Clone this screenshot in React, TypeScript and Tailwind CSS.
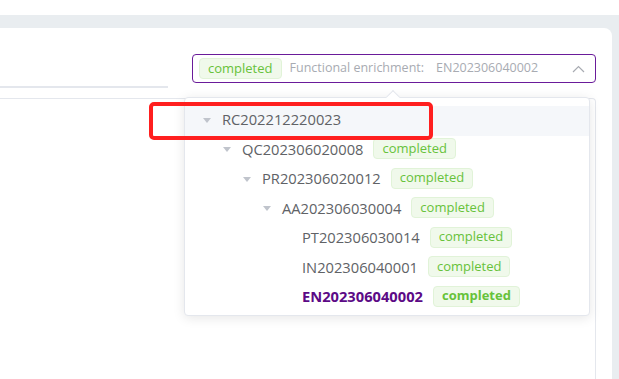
import React from "react"

interface TreeNode {
  code: string
  level: number
  expandable: boolean
  status?: string
  current?: boolean
  highlighted?: boolean
}

const nodes: TreeNode[] = [
  { code: "RC202212220023", level: 0, expandable: true, highlighted: true },
  { code: "QC202306020008", level: 1, expandable: true, status: "completed" },
  { code: "PR202306020012", level: 2, expandable: true, status: "completed" },
  { code: "AA202306030004", level: 3, expandable: true, status: "completed" },
  { code: "PT202306030014", level: 4, expandable: false, status: "completed" },
  { code: "IN202306040001", level: 4, expandable: false, status: "completed" },
  { code: "EN202306040002", level: 4, expandable: false, status: "completed", current: true },
]

const indent = ["pl-[18px]", "pl-[38px]", "pl-[58px]", "pl-[78px]", "pl-[98px]"]

function StatusTag({ label, bold }: { label: string; bold?: boolean }) {
  return (
    <span
      className={`inline-flex h-[21px] items-center rounded-[4px] border border-[#e1f3d8] bg-[#f0f9eb] px-[8px] pb-[1px] text-[13px] leading-none text-[#67c23a] ${
        bold ? "font-bold" : ""
      }`}
    >
      {label}
    </span>
  )
}

function Caret() {
  return (
    <svg width="8" height="5" viewBox="0 0 8 5">
      <polygon points="0,0 8,0 4,5" fill="#c0c4cc" />
    </svg>
  )
}

export default function App() {
  return (
    <div className="relative h-[379px] w-[619px] overflow-hidden bg-white font-['Open_Sans',sans-serif]">
      <div className="h-[15px] bg-white" />

      <div className="h-[364px] bg-[#e9edf0] pr-[7px] pt-[13px]">
        <div className="relative h-full rounded-tr-[8px] bg-white">
          {/* header: tabs + lineage select */}
          <div className="flex h-[70px]">
            <div className="h-[60px] w-[168px] border-b-2 border-[#e4e7ed]" />
            <div className="ml-[24px] mt-[26px] flex h-[29px] w-[404px] items-center rounded-[4px] border border-[#6a1b9a] pl-[6px] pr-[10px]">
              <StatusTag label="completed" />
              <span className="ml-[8px] text-[12.5px] text-[#a8abb2]">Functional enrichment:</span>
              <span className="ml-[12px] text-[12.5px] text-[#a8abb2]">EN202306040002</span>
              <svg width="13" height="8" viewBox="0 0 13 8" className="ml-auto">
                <polyline points="1,7 6.5,1.5 12,7" fill="none" stroke="#a8abb2" strokeWidth="1.2" />
              </svg>
            </div>
          </div>

          {/* content panel */}
          <div className="-ml-px h-[281px] w-[597px] rounded-tr-[4px] border border-b-0 border-[#e4e7ed]" />

          {/* dropdown tree */}
          <div className="absolute left-[184px] top-[69px] h-[219px] w-[406px] rounded-[4px] border border-[#e4e7ed] bg-white pt-[8px] shadow-[0_2px_12px_0_rgba(0,0,0,0.1)]">
            <div className="absolute -top-[6px] left-[203px] h-[10px] w-[10px] rotate-45 border-l border-t border-[#e4e7ed] bg-white" />
            {nodes.map((node) => (
              <div
                key={node.code}
                className={`relative flex h-[29.5px] items-center pb-[3px] ${indent[node.level]} ${
                  node.highlighted ? "bg-[#f5f7fa]" : ""
                }`}
              >
                <span className="flex w-[19px] items-center pt-[2px]">{node.expandable && <Caret />}</span>
                <span
                  className={`text-[14.7px] ${
                    node.current ? "font-bold text-[#5c0a86]" : "text-[#606266]"
                  }`}
                >
                  {node.code}
                </span>
                {node.status && (
                  <span className="ml-[10px] flex">
                    <StatusTag label={node.status} bold={node.current} />
                  </span>
                )}
              </div>
            ))}
          </div>
        </div>
      </div>

      {/* annotation */}
      <div className="absolute left-[149px] top-[102px] h-[38px] w-[284px] rounded-[5px] border-4 border-[#ff1f1f]" />
    </div>
  )
}
